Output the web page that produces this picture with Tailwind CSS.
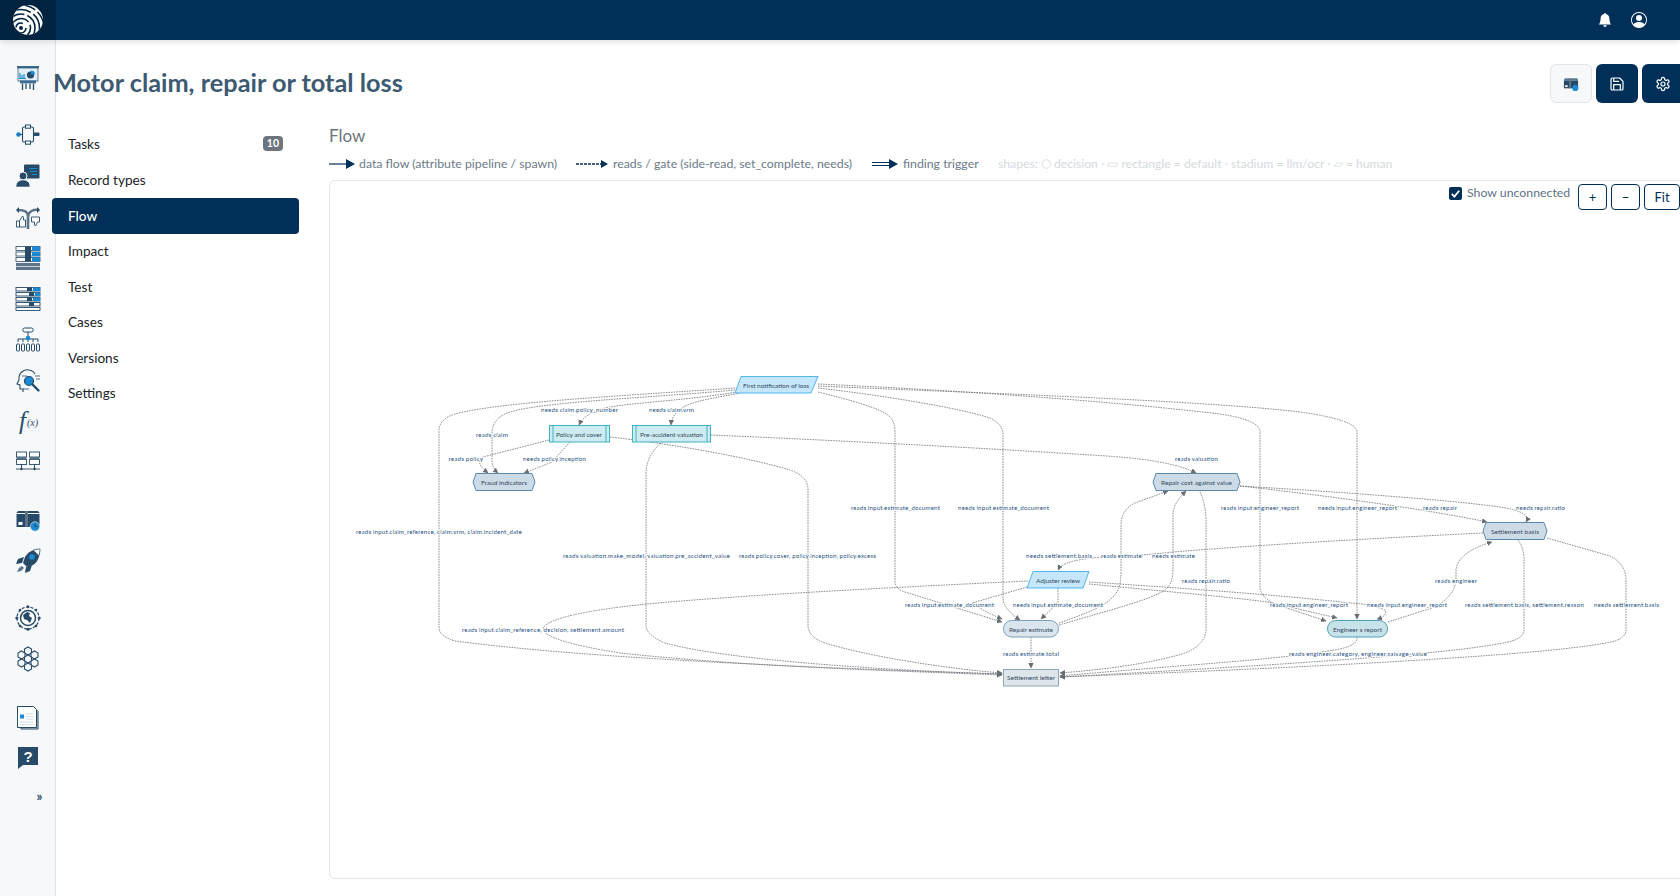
<!DOCTYPE html>
<html lang="en">
<head>
<meta charset="UTF-8">
<title>Motor claim, repair or total loss</title>
<script src="https://cdn.jsdelivr.net/npm/@tailwindcss/browser@4"></script>
</head>
<body class="h-[896px] w-[1680px] overflow-hidden bg-white font-['Lato',sans-serif] text-[#212529]">

<!-- top bar -->
<header class="relative z-30 flex h-10 items-center bg-[#003057] shadow-[0_2px_6px_rgba(0,0,0,0.12)]">
  <div class="flex h-10 w-14 items-center justify-center bg-[#00243f]">
    <svg viewBox="0 0 30 30" class="h-[30px] w-[30px]">
      <defs><clipPath id="logo-clip"><circle cx="15" cy="15" r="15"/></clipPath></defs>
      <circle cx="15" cy="15" r="15" fill="#fff"/>
      <g clip-path="url(#logo-clip)" fill="none" stroke="#00243f" stroke-width="1.600">
        <circle cx="8" cy="23" r="5" stroke-dasharray="12 4 9 6"/>
        <circle cx="8" cy="23" r="9.500" stroke-dasharray="20 3 30 3"/>
        <circle cx="8" cy="23" r="14" stroke-dasharray="26 3 40 3"/>
        <circle cx="8" cy="23" r="18.500" stroke-dasharray="34 3 60 3"/>
        <circle cx="8" cy="23" r="23" stroke-dasharray="40 3 80 3"/>
      </g>
      <circle cx="8" cy="23" r="2" fill="#00243f"/>
    </svg>
  </div>
  <div class="ml-auto mr-[33px] flex items-center gap-[19px]">
    <svg viewBox="0 0 16 16" fill="#fff" class="h-[14px] w-[14px]"><path d="M8 16a2 2 0 0 0 2-2H6a2 2 0 0 0 2 2zm.995-14.901a1 1 0 1 0-1.99 0A5.002 5.002 0 0 0 3 6c0 1.098-.5 6-2 7h14c-1.500-1-2-5.902-2-7 0-2.420-1.720-4.440-4.005-4.901z"/></svg>
    <svg viewBox="0 0 16 16" fill="#fff" class="h-4 w-4"><path d="M11 6a3 3 0 1 1-6 0 3 3 0 0 1 6 0z"/><path fill-rule="evenodd" d="M0 8a8 8 0 1 1 16 0A8 8 0 0 1 0 8zm8-7a7 7 0 0 0-5.468 11.370C3.242 11.226 4.805 10 8 10s4.757 1.225 5.468 2.370A7 7 0 0 0 8 1z"/></svg>
  </div>
</header>

<div class="flex h-[856px]">
  <!-- icon rail -->
  <aside class="relative z-20 flex w-14 shrink-0 flex-col items-center gap-[15px] border-r border-[#dfe2e6] bg-[#f6f8fa] pt-[25px]">
    <svg viewBox="0 0 26 26" class="h-[26px] w-[26px]"><rect x="2" y="1" width="22" height="2.200" fill="#3a6d94"/><rect x="3" y="3" width="20" height="13" fill="#e3eff8" stroke="#264a68" stroke-width=".7"/><path d="M5 8v5M7 10v3M9 9v4" stroke="#1a8ad4" stroke-width="1.200"/><path d="M4 13.500h7" stroke="#1a8ad4"/><circle cx="15.500" cy="10" r="3.600" fill="#264a68"/><path d="M16 5.500a4 4 0 0 1 4 4h-4z" fill="#1a8ad4"/><rect x="5" y="15.500" width="16" height="2.800" fill="#3a6d94"/><path d="M7.500 18.500V25M11 18.500V24M15 18.500V24M18.500 18.500V25" stroke="#264a68" stroke-width="1.300"/></svg>
    <svg viewBox="0 0 26 26" class="mt-4 h-[26px] w-[26px]"><rect x="7.500" y="5" width="11" height="15" rx="1.500" fill="none" stroke="#264a68" stroke-width="1.100"/><rect x="10.500" y="3" width="5" height="3.200" fill="#f6f8fa" stroke="#264a68"/><rect x="10.500" y="19" width="5" height="3.200" fill="#f6f8fa" stroke="#264a68"/><circle cx="3.500" cy="12.500" r="2.300" fill="#1a7fc4"/><path d="M5 12.500h3" stroke="#264a68"/><rect x="18.500" y="10.500" width="6" height="3.600" rx="1" fill="#264a68"/></svg>
    <svg viewBox="0 0 26 26" class="h-[26px] w-[26px]"><rect x="9" y="1.500" width="15.500" height="14" rx="1" fill="#264a68"/><path d="M14 5.500h8M15 8.500h7M17 11.500h5" stroke="#1a8ad4" stroke-width="1.200"/><circle cx="8" cy="13" r="4" fill="#264a68" stroke="#f6f8fa"/><path d="M1 24c0-5 3-7 7-7s7 2 7 7z" fill="#264a68" stroke="#f6f8fa" stroke-width=".6"/></svg>
    <svg viewBox="0 0 26 26" class="h-[26px] w-[26px]"><path d="M13 25V12C13 7 8 6 3 6M13 14C13 7 19 5 24 6" fill="none" stroke="#5d7488" stroke-width="2.600"/><path d="M1 6l3-3v6zM25 6l-3-3v6z" fill="#264a68"/><path d="M1.500 17h3v6h-3zM4.500 17l3-5 1 1v3h2v7h-6z" fill="#fff" stroke="#264a68" stroke-width=".9"/><path d="M16.500 13h8v5h-2l-2 4-1-1v-3h-3z" fill="#fff" stroke="#264a68" stroke-width=".9"/></svg>
    <svg viewBox="0 0 26 26" class="h-[26px] w-[26px]"><g stroke="#264a68" fill="#fff" stroke-width=".8"><rect x="1" y="1.500" width="24" height="4"/><rect x="1" y="7" width="24" height="4"/><rect x="1" y="12.500" width="24" height="4"/></g><rect x="1" y="18" width="24" height="7" fill="#5d7488"/><path d="M1 21.500h24" stroke="#fff" stroke-width=".7"/><path d="M10 1.500h6v15h-6z" fill="#264a68"/><path d="M17 1.500h8v4h-8zM17 7h8v4h-8zM17 12.500h8v4h-8z" fill="#1a8ad4"/></svg>
    <svg viewBox="0 0 26 26" class="h-[26px] w-[26px]"><g stroke="#264a68" fill="#fff" stroke-width=".9"><rect x="1" y="1.500" width="24" height="3.500"/><rect x="1" y="6.500" width="24" height="3.500"/><rect x="1" y="11.500" width="24" height="3.500"/><rect x="1" y="16.500" width="24" height="3.500"/><rect x="1" y="21.500" width="24" height="3"/></g><path d="M12 1.500h5v3.500h-5zM14 6.500h5V10h-5zM12 11.500h5V15h-5zM14 16.500h5V20h-5z" fill="#264a68"/><path d="M18 1.500h7V5h-7zM20 6.500h5V10h-5zM18 11.500h7V15h-7z" fill="#1a8ad4"/></svg>
    <svg viewBox="0 0 26 26" class="h-[26px] w-[26px]"><g fill="none" stroke="#264a68" stroke-width="1"><rect x="8" y="1" width="10" height="4" rx="1.500"/><path d="M13 5v5M3 15v-3h20v3M8 15v-3M13 15v-3M18 15v-3"/><rect x="1.500" y="17" width="3" height="7" rx=".8"/><rect x="6.500" y="17" width="3" height="7" rx=".8"/><rect x="11.500" y="17" width="3" height="7" rx=".8"/><rect x="16.500" y="17" width="3" height="7" rx=".8"/><rect x="21.500" y="17" width="3" height="7" rx=".8"/></g><circle cx="13" cy="11" r="2.300" fill="#1a8ad4"/></svg>
    <svg viewBox="0 0 26 26" class="h-[26px] w-[26px]"><path d="M8 24v-3H5v-4l-3-1 2-4C3 5 9 1 14 2c3 .5 5 2 6 4" fill="none" stroke="#264a68" stroke-width="1.100"/><path d="M8 21h6M7 8h5M20 8h5M21 11h4" stroke="#264a68" stroke-width=".8"/><circle cx="14" cy="13" r="4.500" fill="#1a8ad4" stroke="#264a68" stroke-width="1.200"/><path d="M17.500 16.500l6 6" stroke="#264a68" stroke-width="2.400" stroke-linecap="round"/></svg>
    <svg viewBox="0 0 26 26" class="h-[26px] w-[26px] overflow-visible"><text x="4" y="20" font-family="'Liberation Serif',serif" font-style="italic" font-size="25" fill="#264a68">f</text><text x="12" y="17" font-family="'Liberation Serif',serif" font-style="italic" font-size="10" fill="#264a68">(x)</text></svg>
    <svg viewBox="0 0 26 26" class="h-[26px] w-[26px]"><g fill="#fff" stroke="#264a68" stroke-width=".9"><rect x="1.500" y="2" width="10" height="5"/><rect x="1.500" y="9.500" width="10" height="5"/><rect x="14.500" y="2" width="10" height="5"/><rect x="14.500" y="9.500" width="10" height="5"/></g><path d="M1.500 7h10v2.500h-10zM14.500 7h10v2.500h-10z" fill="#5d7488"/><path d="M1 19h24" stroke="#5d7488" stroke-width="1.200"/><path d="M6.500 14.500V19M19.500 14.500V19" stroke="#264a68"/><circle cx="6.500" cy="19" r="1.200" fill="#264a68"/><circle cx="19.500" cy="19" r="1.200" fill="#264a68"/></svg>
    <svg viewBox="0 0 26 26" class="mt-4 h-[26px] w-[26px]"><path d="M1.500 6C2 4.500 3 4 4 4h18c1 0 2 .500 2.500 2z" fill="#264a68"/><path d="M1.500 7h23v13h-23z" fill="#264a68"/><path d="M10 4h3v16h-3z" fill="#5d7488"/><rect x="3.500" y="15" width="4" height="3" fill="#fff"/><circle cx="20" cy="19.500" r="4.700" fill="#1a8ad4" stroke="#f6f8fa" stroke-width=".6"/><path d="M20 16.500v3h2.500" stroke="#264a68" fill="none"/></svg>
    <svg viewBox="0 0 26 26" class="h-[26px] w-[26px]"><path d="M25 1c-7 0-12 3-15 8l-2 6 4 4 6-2c5-3 7-9 7-16z" fill="#264a68"/><path d="M25 1c-3 0-5 .500-7 1.500 2 1 4.500 3.500 5.500 5.500C24.500 6 25 4 25 1z" fill="#fff" stroke="#264a68" stroke-width=".7"/><circle cx="17" cy="9" r="2.800" fill="#1a8ad4"/><path d="M9 9l-6 2-2 5 6-1zM17 17l-2 6-5 2 1-6z" fill="#264a68"/><path d="M7 18l-3 2-2 4 4-1 3-3z" fill="#5d7488"/></svg>
    <svg viewBox="0 0 26 26" class="mt-[16px] h-[26px] w-[26px]"><circle cx="13" cy="13" r="11" fill="none" stroke="#264a68" stroke-width="1.200" stroke-dasharray="3 1.500"/><g fill="#264a68"><circle cx="13" cy="1.800" r="1.500"/><circle cx="13" cy="24.200" r="1.500"/><circle cx="1.800" cy="13" r="1.500"/><circle cx="24.200" cy="13" r="1.500"/><circle cx="5" cy="5" r="1.300"/><circle cx="21" cy="5" r="1.300"/><circle cx="5" cy="21" r="1.300"/><circle cx="21" cy="21" r="1.300"/></g><circle cx="13" cy="13" r="7.500" fill="#fff" stroke="#264a68" stroke-width="1.500"/><path d="M8 10l4-3 3 1-1 3 3 2-2 5-3-3-3-1z" fill="#264a68"/></svg>
    <svg viewBox="0 0 26 26" class="h-[26px] w-[26px]"><g fill="#f6f8fa" stroke="#264a68" stroke-width="1.100"><path d="M13 1l3.500 2v4L13 9 9.500 7V3z"/><path d="M6.500 5l3.500 2v4l-3.500 2L3 11V7z"/><path d="M19.500 5L23 7v4l-3.500 2L16 11V7z"/><path d="M13 9l3.500 2v4L13 17l-3.500-2v-4z"/><path d="M6.500 13l3.500 2v4l-3.500 2L3 19v-4z"/><path d="M19.500 13l3.500 2v4l-3.500 2-3.500-2v-4z"/><path d="M13 17l3.500 2v4L13 25l-3.500-2v-4z"/></g></svg>
    <svg viewBox="0 0 26 26" class="mt-[18px] h-[26px] w-[26px]"><path d="M4 3.500h16l3 3V24H6z" fill="#c9d5df" stroke="#264a68"/><path d="M2.500 1.500h16l3 3V22.500H2.500z" fill="#fff" stroke="#264a68"/><rect x="5" y="9.500" width="4" height="4" fill="#1a8ad4"/><path d="M10.500 9h8M10.500 11.500h8M10.500 14h8M5 17h13M5 19.500h13" stroke="#cfdbe5"/></svg>
    <svg viewBox="0 0 26 26" class="-mt-[2px] h-[26px] w-[26px]"><path d="M3 3h20v18H8l-5 4z" fill="#264a68"/><text x="13" y="17.500" text-anchor="middle" font-family="'Liberation Sans',sans-serif" font-weight="700" font-size="15" fill="#fff">?</text></svg>
    <span class="mt-[5px] ml-6 text-[13px] leading-none font-bold text-[#264a68]">»</span>
  </aside>

  <!-- main area -->
  <main class="relative z-30 -ml-[2px] min-w-0 flex-1">
    <div class="flex h-[63px] items-start pt-[24px]">
      <div class="flex w-full justify-between">
        <h1 class="-mt-[1px] -ml-[1px] text-[25.300px] leading-[38px] font-bold whitespace-nowrap text-[#3d5a73]">Motor claim, repair or total loss</h1>
        <div class="-mr-[8px] flex gap-1">
          <button class="flex h-[39px] w-[42px] items-center justify-center rounded-md border border-[#e2e5e9] bg-[#f6f8fa]">
            <svg viewBox="0 0 26 26" class="h-4 w-4"><path d="M1.500 7h23v13h-23z" fill="#264a68"/><path d="M1.500 6C2 4.500 3 4 4 4h18c1 0 2 .500 2.500 2z" fill="#264a68"/><path d="M10 4h3v16h-3z" fill="#5d7488"/><rect x="3.500" y="15" width="4" height="3" fill="#fff"/><circle cx="20" cy="19.500" r="5" fill="#1a8ad4"/></svg>
          </button>
          <button class="flex h-[39px] w-[42px] items-center justify-center rounded-md bg-[#003057]">
            <svg viewBox="0 0 24 24" fill="none" stroke="#fff" stroke-width="1.800" stroke-linejoin="round" class="h-4 w-4"><path d="M19 21H5a2 2 0 0 1-2-2V5a2 2 0 0 1 2-2h11l5 5v11a2 2 0 0 1-2 2z"/><path d="M17 21v-8H7v8"/><path d="M7 3v5h8"/></svg>
          </button>
          <button class="flex h-[39px] w-[46px] items-center justify-start rounded-l-md bg-[#003057] pl-[13px]">
            <svg viewBox="0 0 24 24" fill="none" stroke="#fff" stroke-width="1.800" class="h-4 w-4"><path d="M12.220 2h-.44a2 2 0 0 0-2 2v.18a2 2 0 0 1-1 1.730l-.43.25a2 2 0 0 1-2 0l-.15-.08a2 2 0 0 0-2.730.73l-.22.38a2 2 0 0 0 .73 2.730l.15.1a2 2 0 0 1 1 1.720v.51a2 2 0 0 1-1 1.740l-.15.09a2 2 0 0 0-.73 2.730l.22.38a2 2 0 0 0 2.730.73l.15-.08a2 2 0 0 1 2 0l.43.25a2 2 0 0 1 1 1.730V20a2 2 0 0 0 2 2h.44a2 2 0 0 0 2-2v-.18a2 2 0 0 1 1-1.730l.43-.25a2 2 0 0 1 2 0l.15.08a2 2 0 0 0 2.730-.73l.22-.39a2 2 0 0 0-.73-2.730l-.15-.08a2 2 0 0 1-1-1.740v-.5a2 2 0 0 1 1-1.740l.15-.09a2 2 0 0 0 .73-2.730l-.22-.38a2 2 0 0 0-2.730-.73l-.15.08a2 2 0 0 1-2 0l-.43-.25a2 2 0 0 1-1-1.730V4a2 2 0 0 0-2-2z"/><circle cx="12" cy="12" r="3"/></svg>
          </button>
        </div>
      </div>
    </div>

    <div class="flex">
      <!-- section nav -->
      <nav class="-ml-[2px] flex w-[247px] shrink-0 flex-col pt-[23px] text-[13.600px] leading-[36px]">
        <a class="flex h-[35.500px] items-center justify-between rounded pr-4 pl-4">Tasks <span class="rounded bg-[#6c757d] px-[4px] text-[10.500px] leading-[15px] font-bold text-white">10</span></a>
        <a class="flex h-[36px] items-center rounded pl-4">Record types</a>
        <a class="flex h-[36px] items-center rounded bg-[#003057] pl-4 font-medium text-white">Flow</a>
        <a class="flex h-[35.500px] items-center rounded pl-4">Impact</a>
        <a class="flex h-[35.500px] items-center rounded pl-4">Test</a>
        <a class="flex h-[35.500px] items-center rounded pl-4">Cases</a>
        <a class="flex h-[35.500px] items-center rounded pl-4">Versions</a>
        <a class="flex h-[35.500px] items-center rounded pl-4">Settings</a>
      </nav>

      <!-- flow section -->
      <section class="ml-[30px] w-[1360px] shrink-0 pt-[21px]">
        <h2 class="text-[17px] leading-[24px] text-[#6c757d]">Flow</h2>
        <div class="mt-[4px] flex h-[24px] items-center text-[12.300px] whitespace-nowrap text-[#6c7a89]">
          <svg width="27" height="10" class="mr-[3px]"><path d="M0 5h18" stroke="#003057" stroke-width="1.200"/><path d="M17 0l9 5-9 5z" fill="#003057"/></svg>
          <span class="w-[199px]">data flow (attribute pipeline / spawn)</span>
          <svg width="33" height="10" class="mr-[4px] ml-[18px]"><path d="M0 5h26" stroke="#003057" stroke-width="1.400" stroke-dasharray="3 1"/><path d="M25 1l7 4-7 4z" fill="#003057"/></svg>
          <span class="w-[241px]">reads / gate (side-read, set_complete, needs)</span>
          <svg width="27" height="10" class="mr-[4px] ml-[18px]"><path d="M0 3.500h18M0 6.500h18" stroke="#003057" stroke-width="1.200"/><path d="M17 0l9 5-9 5z" fill="#003057"/></svg>
          <span class="w-[77px]">finding trigger</span>
          <span class="ml-[18px] text-[12.200px] text-[#d4dae0]">shapes: ⬡ decision · ▭ rectangle = default · stadium = llm/ocr · ▱ = human</span>
        </div>

        <div class="relative mt-[4px] h-[699px] rounded-md border border-[#e2e5e9] bg-white">
          <!-- diagram canvas, coordinates are page pixels -->
          <svg viewBox="329 180 1352 699" width="1352" height="699" class="absolute top-[-1px] left-[-1px]">
            <defs>
              <marker id="arr" markerUnits="userSpaceOnUse" markerWidth="7" markerHeight="7" refX="5" refY="2.700" orient="auto"><path d="M0 0L5.500 2.700 0 5.400z" fill="#666d75"/></marker>
            </defs>
            <g fill="none" stroke="#6b7076" stroke-width=".8" stroke-dasharray="1.600 1">
              <path d="M735 388C620 396 500 402 455 414Q439 419 439 431L439 628Q439 636 455 641C600 660 850 669 1002 674" marker-end="url(#arr)"/>
              <path d="M735 390C650 398 530 402 505 414Q492 420 492 434L492 460Q492 468 498 473" marker-end="url(#arr)"/>
              <path d="M737 392C690 400 640 402 610 407Q585 412 579 425" marker-end="url(#arr)"/>
              <path d="M740 393C720 397 700 400 690 404Q672 411 671 425" marker-end="url(#arr)"/>
              <path d="M549 440L483 457Q474 462 488 473" marker-end="url(#arr)"/>
              <path d="M570 442L552 462Q540 467 524 473" marker-end="url(#arr)"/>
              <path d="M610 437C680 445 750 458 790 470Q808 476 808 490L808 625Q808 637 825 643C870 657 950 669 1002 673" marker-end="url(#arr)"/>
              <path d="M661 443Q646 456 646 474L646 625Q646 635 665 643C730 661 900 671 1002 674" marker-end="url(#arr)"/>
              <path d="M711 435C850 441 1000 449 1090 455Q1170 459 1196 473" marker-end="url(#arr)"/>
              <path d="M818 392C850 400 880 408 889 416Q895 421 895 432L895 583Q897 590 905 592L1002 622" marker-end="url(#arr)"/>
              <path d="M818 388C880 395 960 408 990 418Q1003 424 1003 435L1003 600Q1005 610 1020 620" marker-end="url(#arr)"/>
              <path d="M1027 587L972 603Q985 612 1002 619" marker-end="url(#arr)"/>
              <path d="M1058 588L1058 603L1041 619" marker-end="url(#arr)"/>
              <path d="M1028 581C900 587 700 597 620 607Q545 617 543 629Q545 641 620 653C750 667 900 671 1002 675" marker-end="url(#arr)"/>
              <path d="M818 386C950 392 1200 400 1300 412Q1357 420 1357 432L1357 619" marker-end="url(#arr)"/>
              <path d="M818 384C950 390 1100 400 1220 414Q1260 420 1260 432L1260 588Q1262 598 1275 604L1326 621" marker-end="url(#arr)"/>
              <path d="M1059 623C1090 612 1110 605 1118 590Q1121 584 1121 570L1121 525Q1121 510 1135 503L1168 491" marker-end="url(#arr)"/>
              <path d="M1059 625C1110 610 1150 600 1165 590Q1173 584 1173 570L1173 515Q1173 503 1186 491" marker-end="url(#arr)"/>
              <path d="M1200 492Q1206 505 1206 520L1206 630Q1205 645 1185 653C1150 664 1100 670 1060 673" marker-end="url(#arr)"/>
              <path d="M1031 637L1031 668" marker-end="url(#arr)"/>
              <path d="M1240 486C1320 495 1420 508 1487 522" marker-end="url(#arr)"/>
              <path d="M1240 486C1340 492 1450 500 1500 507Q1532 512 1526 522" marker-end="url(#arr)"/>
              <path d="M1483 533C1360 539 1260 545 1173 552C1130 557 1100 556 1085 559Q1062 562 1058 570" marker-end="url(#arr)"/>
              <path d="M1089 582C1180 588 1280 595 1350 603Q1372 604 1385 610Q1388 616 1377 619" marker-end="url(#arr)"/>
              <path d="M1089 584C1150 590 1220 596 1268 602L1337 618" marker-end="url(#arr)"/>
              <path d="M1388 622L1435 607Q1456 595 1456 578L1456 570Q1458 552 1492 542" marker-end="url(#arr)"/>
              <path d="M1357 637Q1358 645 1340 649C1280 660 1180 665 1060 676" marker-end="url(#arr)"/>
              <path d="M1518 540Q1524 548 1524 560L1524 630Q1524 636 1515 640C1480 652 1300 664 1060 677" marker-end="url(#arr)"/>
              <path d="M1547 538L1610 556Q1626 564 1626 580L1626 630Q1626 637 1615 641C1560 655 1300 668 1060 677" marker-end="url(#arr)"/>
            </g>

            <!-- nodes -->
            <path d="M741 376.500H818L811 393H735Z" fill="#c6e7fb" stroke="#4fb7ea"/>
            <rect x="549.500" y="425.500" width="60" height="16.500" fill="#cdebf0" stroke="#3fb3c6"/>
            <path d="M553 425.500V442M606 425.500V442" stroke="#3fb3c6"/>
            <rect x="632.500" y="425.500" width="78" height="16.500" fill="#cdebf0" stroke="#3fb3c6"/>
            <path d="M636 425.500V442M707 425.500V442" stroke="#3fb3c6"/>
            <path d="M476 473.500H532L535 482L532 490.500H476L473 482Z" fill="#cddbe7" stroke="#5a8ab0"/>
            <path d="M1156 473.500H1237L1240 482L1237 490.500H1156L1153 482Z" fill="#cddbe7" stroke="#5a8ab0"/>
            <path d="M1486 522.500H1544L1547 531L1544 539.500H1486L1483 531Z" fill="#cddbe7" stroke="#5a8ab0"/>
            <path d="M1033 571.500H1089L1083 588H1027Z" fill="#c6e7fb" stroke="#4fb7ea"/>
            <rect x="1003.500" y="620.500" width="55" height="16.500" rx="8.200" fill="#dbe5ee" stroke="#7ca0bf"/>
            <rect x="1003.500" y="669.500" width="55" height="16.500" fill="#dfe6eb" stroke="#8fa8b8"/>
            <rect x="1327.500" y="620.500" width="60" height="16.500" rx="8.200" fill="#c8e2ea" stroke="#4f9fb8"/>

            <g font-family="Lato,sans-serif" font-size="6.500" fill="#334a5e" dominant-baseline="central">
              <text x="743" y="385" textLength="66">First notification of loss</text>
              <text x="556" y="434" textLength="46">Policy and cover</text>
              <text x="640" y="434" textLength="63">Pre-accident valuation</text>
              <text x="481" y="482" textLength="46">Fraud indicators</text>
              <text x="1161" y="482" textLength="71">Repair cost against value</text>
              <text x="1491" y="531" textLength="48">Settlement basis</text>
              <text x="1036" y="580" textLength="44">Adjuster review</text>
              <text x="1009" y="629" textLength="44">Repair estimate</text>
              <text x="1007" y="677.500" textLength="48">Settlement letter</text>
              <text x="1333" y="629" textLength="49">Engineer s report</text>
            </g>

            <!-- edge labels -->
            <g font-family="Lato,sans-serif" font-size="6.500" fill="#1d4f80" dominant-baseline="central" stroke="#fff" stroke-width="1.500" paint-order="stroke">
              <text x="541" y="409" textLength="77">needs claim.policy_number</text>
              <text x="649" y="409" textLength="45">needs claim.vrm</text>
              <text x="476" y="434" textLength="32">reads claim</text>
              <text x="448.500" y="458" textLength="34.500">reads policy</text>
              <text x="523" y="458" textLength="63">needs policy.inception</text>
              <text x="356" y="531" textLength="166">reads input.claim_reference, claim.vrm, claim.incident_date</text>
              <text x="563" y="555" textLength="167">reads valuation.make_model, valuation.pre_accident_value</text>
              <text x="739" y="555" textLength="137">reads policy.cover, policy.inception, policy.excess</text>
              <text x="851" y="507" textLength="89">reads input.estimate_document</text>
              <text x="958" y="507" textLength="91">needs input.estimate_document</text>
              <text x="1175" y="458" textLength="43">reads valuation</text>
              <text x="1026" y="555" textLength="66">needs settlement.basis</text>
              <text x="1101" y="555" textLength="41">reads estimate</text>
              <text x="1152" y="555" textLength="43">needs estimate</text>
              <text x="1182" y="580" textLength="48">reads repair.ratio</text>
              <text x="905" y="604" textLength="89">reads input.estimate_document</text>
              <text x="1013" y="604" textLength="90">needs input.estimate_document</text>
              <text x="1003" y="653" textLength="56">reads estimate.total</text>
              <text x="462" y="629" textLength="162">reads input.claim_reference, decision, settlement.amount</text>
              <text x="1221" y="507" textLength="78">reads input.engineer_report</text>
              <text x="1318" y="507" textLength="79">needs input.engineer_report</text>
              <text x="1423" y="507" textLength="34">reads repair</text>
              <text x="1516" y="507" textLength="49">needs repair.ratio</text>
              <text x="1270" y="604" textLength="78">reads input.engineer_report</text>
              <text x="1367" y="604" textLength="80">needs input.engineer_report</text>
              <text x="1435" y="580" textLength="42">reads engineer</text>
              <text x="1465" y="604" textLength="119">reads settlement.basis, settlement.reason</text>
              <text x="1594" y="604" textLength="65">needs settlement.basis</text>
              <text x="1289" y="653" textLength="138">reads engineer.category, engineer.salvage_value</text>
            </g>
          </svg>

          <!-- controls over the canvas -->
          <div class="absolute top-[3px] right-[8px] flex items-start">
            <label class="-mt-[1px] flex items-center text-[12.300px] leading-[20px] whitespace-nowrap text-[#5f7286]">
              <span class="mr-[5px] flex h-[13px] w-[13px] items-center justify-center rounded-[2px] bg-[#003057]">
                <svg viewBox="0 0 12 12" class="h-[11px] w-[11px]" fill="none" stroke="#fff" stroke-width="2"><path d="M2 6.500l2.800 2.800L10 3"/></svg>
              </span>
              <span class="w-[103px]">Show unconnected</span>
            </label>
            <div class="ml-2 flex gap-1 text-[13px] text-[#003057]">
              <button class="h-[26px] w-[29px] rounded border border-[#003057] bg-white leading-none">+</button>
              <button class="h-[26px] w-[29px] rounded border border-[#003057] bg-white leading-none">−</button>
              <button class="h-[26px] w-[36px] rounded border border-[#003057] bg-white leading-none">Fit</button>
            </div>
          </div>
        </div>
      </section>
    </div>
  </main>
</div>
</body>
</html>
